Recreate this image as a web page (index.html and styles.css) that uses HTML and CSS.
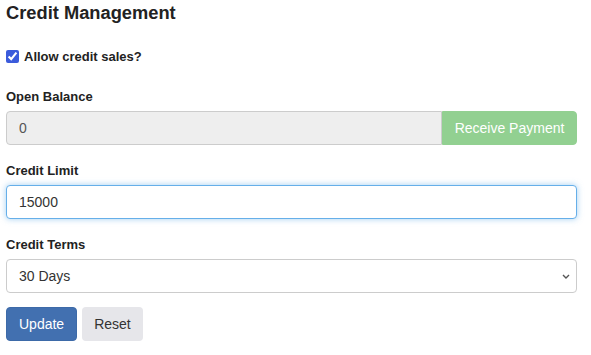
FILE: index.html
```html
<!DOCTYPE html>
<html lang="en">
<head>
  <meta charset="UTF-8">
  <meta name="viewport" content="width=device-width, initial-scale=1.0">
  <title>Credit Management</title>
  <link rel="stylesheet" href="styles.css">
</head>
<body>
  <div class="panel">
    <h1>Credit Management</h1>

    <label class="check">
      <input type="checkbox" checked>
      <span>Allow credit sales?</span>
    </label>

    <div class="field">
      <label>Open Balance</label>
      <div class="input-group">
        <input class="control" type="text" value="0" disabled>
        <button class="btn btn-success" disabled>Receive Payment</button>
      </div>
    </div>

    <div class="field">
      <label>Credit Limit</label>
      <input class="control focus" type="text" value="15000">
    </div>

    <div class="field">
      <label>Credit Terms</label>
      <div class="select-wrap">
        <select class="control">
          <option>30 Days</option>
          <option>60 Days</option>
          <option>90 Days</option>
        </select>
        <svg class="caret" width="8" height="5" viewBox="0 0 8 5"><path d="M1 1l3 3 3-3" fill="none" stroke="#555" stroke-width="1.4"/></svg>
      </div>
    </div>

    <div class="actions">
      <button class="btn btn-primary">Update</button>
      <button class="btn btn-default">Reset</button>
    </div>
  </div>
</body>
</html>
```

FILE: styles.css
```css
body {
  margin: 0;
  font-family: "Liberation Sans", Arial, sans-serif;
  color: #333;
  background: #fff;
}

.panel {
  width: 571px;
  padding: 0 6px;
}

h1 {
  font-size: 18.3px;
  font-weight: bold;
  color: #222;
  margin: 2px 0 0;
  line-height: 22px;
}

.check {
  display: flex;
  align-items: center;
  gap: 5px;
  margin-top: 25px;
  margin-bottom: 25px;
  font-size: 13px;
  font-weight: bold;
  color: #222;
}

.check input {
  width: 13px;
  height: 13px;
  margin: 0;
  accent-color: #3b5bdb;
}

.field {
  margin-top: 18px;
}

.field label {
  display: block;
  font-size: 13px;
  font-weight: bold;
  color: #222;
  margin-bottom: 7px;
}

.control {
  box-sizing: border-box;
  width: 100%;
  height: 34px;
  padding: 6px 12px;
  font-family: inherit;
  font-size: 14px;
  color: #333;
  border: 1px solid #ccc;
  border-radius: 4px;
  background: #fff;
  outline: none;
}

.control:disabled {
  background: #eee;
  color: #555;
}

.control.focus {
  border-color: #66afe9;
  box-shadow: 0 0 6px rgba(102, 175, 233, 0.6);
}

.input-group {
  display: flex;
}

.input-group .control {
  flex: 1;
  border-radius: 4px 0 0 4px;
}

.input-group .btn {
  border-radius: 0 4px 4px 0;
  width: 135px;
  padding: 6px 0;
  white-space: nowrap;
}

.select-wrap {
  position: relative;
}

.select-wrap select {
  appearance: none;
  -webkit-appearance: none;
}

.caret {
  position: absolute;
  right: 7px;
  top: 15px;
  pointer-events: none;
}

.btn {
  font-family: inherit;
  font-size: 14px;
  border: 1px solid transparent;
  border-radius: 4px;
  padding: 6px 12px;
  height: 34px;
  cursor: pointer;
}

.btn-success {
  background: #92d091;
  color: #fff;
  border-color: #92d091;
}

.btn-primary {
  background: #4270b0;
  color: #fff;
  border-color: #3d6aa8;
}

.btn-default {
  background: #e6e6ea;
  color: #333;
  padding: 6px 11px;
}

.actions {
  display: flex;
  gap: 5px;
  margin-top: 14px;
}
```
